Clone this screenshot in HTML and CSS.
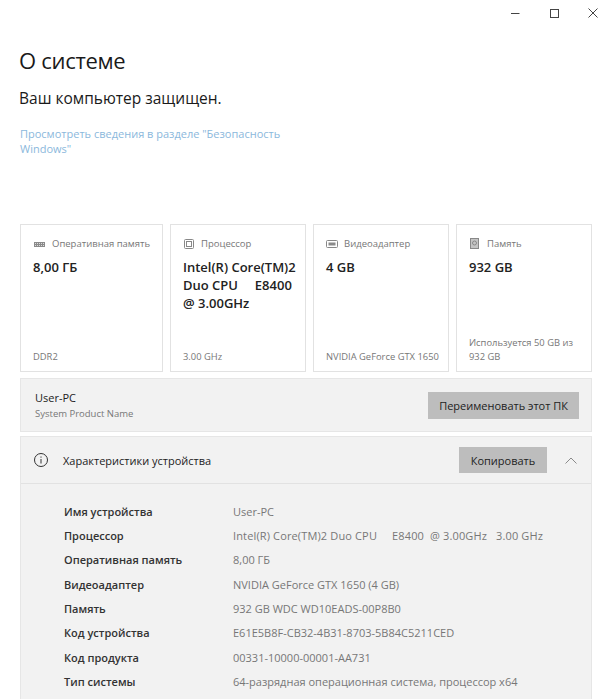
FILE: index.html
```html
<!DOCTYPE html>
<html lang="ru">
<head>
<meta charset="utf-8">
<title>О системе</title>
<link rel="stylesheet" href="styles.css">
</head>
<body>
<div class="titlebar">
  <svg class="win-icon" width="10" height="10" viewBox="0 0 10 10"><path d="M1 5.5h8.5" /></svg>
  <svg class="win-icon" width="10" height="10" viewBox="0 0 10 10"><rect x="1.5" y="1.5" width="8" height="8" /></svg>
  <svg class="win-icon" width="10" height="10" viewBox="0 0 10 10"><path d="M0.5 0.5l9 9M9.5 0.5l-9 9" /></svg>
</div>
<main class="content">
  <h1 class="title">О системе</h1>
  <p class="status">Ваш компьютер защищен.</p>
  <a class="link">Просмотреть сведения в разделе "Безопасность Windows"</a>
  <section class="cards">
    <article class="card">
      <div class="card-head wide">
        <svg class="card-icon" width="12" height="12" viewBox="0 0 12 12"><rect x="1" y="4" width="11" height="5" fill="#8a8a8a" stroke="none"/><path d="M2 5.5h9M2 7.5h9" stroke="#ddd" stroke-dasharray="1 1"/></svg>
        <span>Оперативная память</span>
      </div>
      <div class="card-value">8,00 ГБ</div>
      <div class="card-foot">DDR2</div>
    </article>
    <article class="card">
      <div class="card-head">
        <svg class="card-icon" width="12" height="12" viewBox="0 0 12 12"><rect x="1.5" y="1.5" width="9" height="9" rx="1"/><rect x="3.5" y="3.5" width="5" height="5"/></svg>
        <span>Процессор</span>
      </div>
      <div class="card-value pre">Intel(R) Core(TM)2 Duo CPU     E8400 @ 3.00GHz</div>
      <div class="card-foot">3.00 GHz</div>
    </article>
    <article class="card">
      <div class="card-head">
        <svg class="card-icon" width="12" height="12" viewBox="0 0 12 12"><rect x="0.5" y="2.5" width="11" height="7" rx="1"/><rect x="2.5" y="4.5" width="7" height="3" fill="#8a8a8a" stroke="none"/></svg>
        <span>Видеоадаптер</span>
      </div>
      <div class="card-value">4 GB</div>
      <div class="card-foot">NVIDIA GeForce GTX 1650</div>
    </article>
    <article class="card">
      <div class="card-head">
        <svg class="card-icon" width="12" height="12" viewBox="0 0 12 12"><rect x="1.5" y="0.5" width="8" height="10" fill="#c4c4c4"/><circle cx="5.5" cy="5" r="2"/></svg>
        <span>Память</span>
      </div>
      <div class="card-value">932 GB</div>
      <div class="card-foot">Используется 50 GB из 932 GB</div>
    </article>
  </section>
  <section class="rename">
    <div>
      <div class="pc-name">User-PC</div>
      <div class="pc-sub">System Product Name</div>
    </div>
    <button class="btn">Переименовать этот ПК</button>
  </section>
  <section class="specs">
    <header class="specs-head">
      <svg class="info" width="16" height="16" viewBox="0 0 16 16"><circle cx="8" cy="8" r="6.5"/><path d="M8 7v4.5M8 4.5v1.2"/></svg>
      <span class="specs-title">Характеристики устройства</span>
      <button class="btn">Копировать</button>
      <svg class="chev" width="12" height="7" viewBox="0 0 12 7"><path d="M0.5 6.5L6 1l5.5 5.5"/></svg>
    </header>
    <dl class="spec-list">
      <dt>Имя устройства</dt><dd>User-PC</dd>
      <dt>Процессор</dt><dd class="pre spaced">Intel(R) Core(TM)2 Duo CPU     E8400  @ 3.00GHz   3.00 GHz</dd>
      <dt>Оперативная память</dt><dd>8,00 ГБ</dd>
      <dt>Видеоадаптер</dt><dd>NVIDIA GeForce GTX 1650 (4 GB)</dd>
      <dt>Память</dt><dd>932 GB WDC WD10EADS-00P8B0</dd>
      <dt>Код устройства</dt><dd>E61E5B8F-CB32-4B31-8703-5B84C5211CED</dd>
      <dt>Код продукта</dt><dd>00331-10000-00001-AA731</dd>
      <dt>Тип системы</dt><dd>64-разрядная операционная система, процессор x64</dd>
    </dl>
  </section>
</main>
</body>
</html>
```
FILE: styles.css
```css
* { box-sizing: border-box; }
html, body { margin: 0; height: 699px; overflow: hidden; background: #fff; }
body { font-family: "Open Sans", "Noto Sans", sans-serif; color: #1a1a1a; }
.titlebar { display: flex; justify-content: flex-end; gap: 29px; height: 30px; padding: 8px 10px 0 0; }
.win-icon { fill: none; stroke: #444; stroke-width: 1; }
.content { padding: 0 16px 0 20px; }
.title { margin: 15px 0 0 -1px; font-size: 22px; line-height: 30px; font-weight: 400; letter-spacing: -0.3px; }
.status { margin: 12px 0 0 -1px; font-size: 15.5px; line-height: 22px; }
.link { display: block; margin-top: 17px; width: 270px; font-size: 11px; line-height: 15px; color: #8bb8dc; }
.cards { display: grid; grid-template-columns: 143px 136px 136px 136px; gap: 7px; margin-top: 68px; }
.card { display: flex; flex-direction: column; height: 148px; padding: 12px 4px 7px 12px; border: 1px solid #e2e2e2; }
.card-head { display: flex; align-items: center; gap: 6px; font-size: 9.5px; line-height: 14px; color: #777; white-space: nowrap; }
.card-head.wide { gap: 7px; }
.card-icon { flex: none; fill: none; stroke: #888; stroke-width: 1; }
.card-value { margin-top: 7px; font-size: 13px; line-height: 18px; font-weight: 600; color: #222; }
.pre { white-space: pre-wrap; }
.card-foot { margin-top: auto; font-size: 9.4px; line-height: 14px; color: #777; }
.rename { display: flex; justify-content: space-between; align-items: center; height: 54px; margin-top: 6px; padding: 0 12px 0 14px; background: #f2f2f2; border: 1px solid #e6e6e6; }
.pc-name { font-size: 11px; line-height: 15px; color: #222; }
.pc-sub { margin-top: 2px; font-size: 9.5px; line-height: 13px; color: #777; }
.btn { height: 27px; padding: 0 11px; border: 0; background: #bdbdbd; font: inherit; font-size: 11px; color: #222; }
.specs { margin-top: 4px; background: #f2f2f2; border: 1px solid #e6e6e6; height: 270px; }
.specs-head { display: flex; align-items: center; height: 47px; padding: 0 14px 0 12px; border-bottom: 1px solid #e2e2e2; }
.specs-head .btn { height: 26px; width: 88px; padding: 0; }
.info { fill: none; stroke: #333; stroke-width: 1; flex: none; }
.specs-title { flex: 1; margin-left: 14px; font-size: 11px; color: #222; }
.chev { fill: none; stroke: #8a8a8a; stroke-width: 1; margin-left: 18px; }
.spec-list { display: grid; grid-template-columns: 169px 1fr; grid-auto-rows: 24.35px; align-items: center; margin: 15px 0 0 43px; font-size: 11px; }
.spec-list dt { font-weight: 600; color: #333; }
.spec-list dd { margin: 0; color: #777; }
.spaced { letter-spacing: 0.14px; }
```
